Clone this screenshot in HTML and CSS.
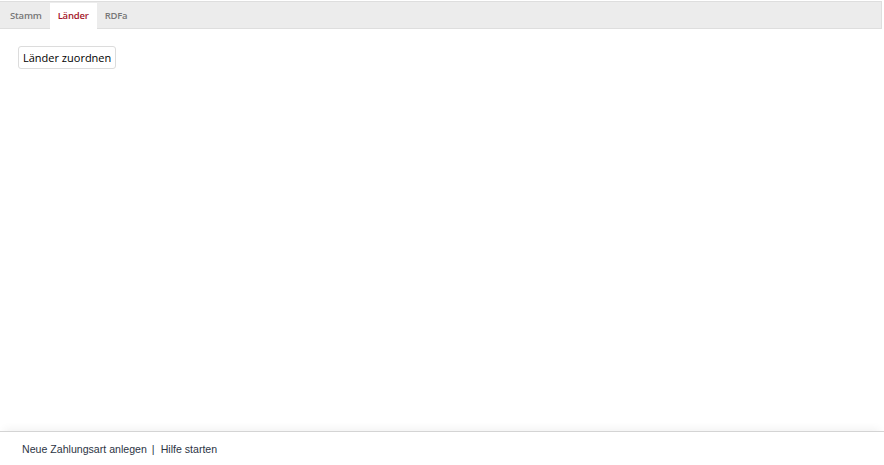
FILE: index.html
```html
<!DOCTYPE html>
<html lang="de">
<head>
<meta charset="utf-8">
<title>Zahlungsart</title>
<link rel="stylesheet" href="styles.css">
</head>
<body>
<div class="page">
  <div class="tabs">
    <div class="tab">Stamm</div>
    <div class="tab active">Länder</div>
    <div class="tab">RDFa</div>
  </div>
  <div class="content">
    <button class="btn">Länder zuordnen</button>
  </div>
  <div class="footer">
    <a class="link">Neue Zahlungsart anlegen</a>
    <span class="sep">|</span>
    <a class="link">Hilfe starten</a>
  </div>
</div>
</body>
</html>
```
FILE: styles.css
```css
html, body {
  margin: 0;
  padding: 0;
  background: #fff;
}
.page {
  width: 884px;
  height: 465px;
  display: flex;
  flex-direction: column;
}
.tabs {
  margin: 1px 2px 0 0;
  height: 26px;
  display: flex;
  background: #ececec;
  border: 1px solid #dedede;
  border-left: none;
  padding-left: 2px;
}
.tab {
  font-family: "Open Sans", sans-serif;
  font-weight: 600;
  font-size: 9.5px;
  letter-spacing: -0.2px;
  color: #777;
  padding: 0 8px;
  line-height: 28px;
  height: 27px;
}
.tab.active {
  background: #fff;
  color: #a4162a;
  margin-top: 1px;
  line-height: 26px;
}
.content {
  flex: 1;
  padding: 17px 18px;
}
.btn {
  font-family: "Open Sans", sans-serif;
  font-size: 11px;
  color: #000;
  background: #fff;
  border: 1px solid #dcdcdc;
  border-radius: 3px;
  height: 23px;
  padding: 0 4px;
}
.footer {
  height: 33px;
  border-top: 1px solid #d4d4d4;
  box-shadow: 0 -6px 8px -4px rgba(0,0,0,0.06);
  padding-left: 22px;
  display: flex;
  align-items: center;
  font-family: "Liberation Sans", Arial, sans-serif;
  font-size: 10.6px;
  color: #2c3444;
}
.link {
  color: #2c3444;
}
.sep {
  color: #2c3444;
  margin: 0 6px 0 5px;
}
```
